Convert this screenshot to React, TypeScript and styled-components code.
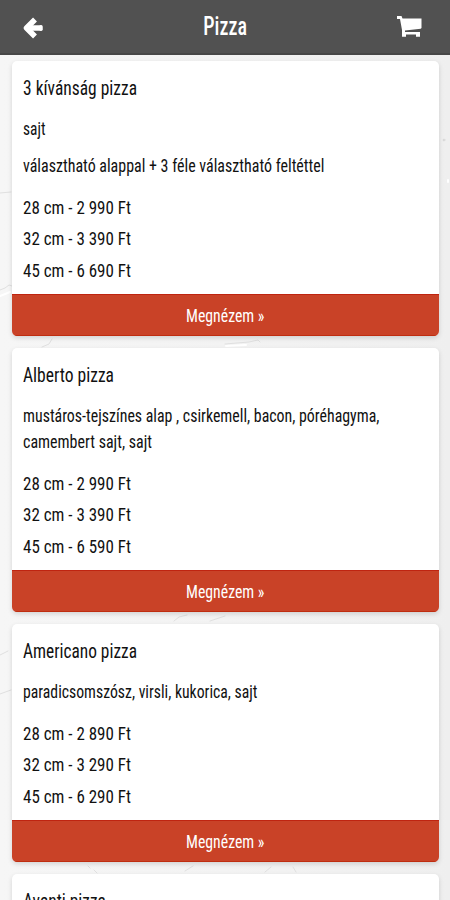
import React from 'react';
import styled, { createGlobalStyle } from 'styled-components';

const GlobalStyle = createGlobalStyle`
  html, body { margin: 0; padding: 0; height: 900px; overflow: hidden; }
  body { background: #f3f3f3; font-family: "Roboto", "Liberation Sans", sans-serif; font-stretch: 75%; color: #111; }
  * { box-sizing: border-box; }
`;

const Screen = styled.div`
  position: relative;
  isolation: isolate;
  width: 450px;
  height: 900px;
  overflow: hidden;
  background: linear-gradient(90deg, #f6f6f6 0, #f3f3f3 50%, #efefef 100%);
`;

const Plaster = styled.svg`
  position: absolute;
  inset: 0;
  z-index: -1;
`;

const Header = styled.header`
  display: grid;
  grid-template-columns: 60px 1fr 60px;
  align-items: center;
  height: 55px;
  padding: 0 12px 0 12px;
  background: #515151;
  border-bottom: 2px solid #474747;
  color: #fff;
`;

const IconButton = styled.button<{ $end?: boolean }>`
  display: flex;
  justify-content: ${p => (p.$end ? 'flex-end' : 'flex-start')};
  padding: ${p => (p.$end ? '0 16px 0 0' : '3px 0 0 10px')};
  border: 0;
  background: none;
  color: inherit;
`;

const PageTitle = styled.h1`
  margin: 0;
  text-align: center;
  font-size: 25px;
  font-weight: 500;
  line-height: 50px;
`;

const Narrow = styled.span<{ $scale: number; $origin?: string }>`
  display: inline-block;
  white-space: nowrap;
  transform: scaleX(${p => p.$scale});
  transform-origin: ${p => p.$origin ?? 'left'} center;
`;

const List = styled.main`
  display: flex;
  flex-direction: column;
  gap: 12px;
  padding: 6px 11px 0 12px;
`;

const Card = styled.article`
  flex: none;
  overflow: hidden;
  border-radius: 5px;
  background: #fff;
  box-shadow: 0 2px 5px rgba(0, 0, 0, 0.14);
`;

const CardBody = styled.div`
  padding: 8.5px 11px 7.5px;
`;

const Name = styled.h2`
  margin: 0 0 9px;
  font-size: 21px;
  font-weight: 400;
  line-height: 37px;
`;

const Description = styled.p`
  display: flex;
  flex-direction: column;
  align-items: flex-start;
  margin: 0 0 11px;
  font-size: 19px;
  line-height: 26px;
`;

const Prices = styled.ul`
  margin: 13px 0 0;
  padding: 0;
  list-style: none;
  font-size: 19px;
  line-height: 31.5px;
`;

const ViewButton = styled.button`
  display: block;
  width: 100%;
  height: 42.5px;
  padding: 0;
  border: 0;
  border-top: 1px solid #bf2410;
  border-bottom: 1px solid #bf2d10;
  background: #c94227;
  color: #fff;
  font: inherit;
  font-size: 19px;
  line-height: 42px;
  text-align: center;
`;

type Line = [text: string, scale: number];
type Pizza = { name: Line; paragraphs: Line[][]; prices: string[] };

const pizzas: Pizza[] = [
  {
    name: ['3 kívánság pizza', 0.8315],
    paragraphs: [[['sajt', 0.812]], [['választható alappal + 3 féle választható feltéttel', 0.8405]]],
    prices: ['28 cm - 2 990 Ft', '32 cm - 3 390 Ft', '45 cm - 6 690 Ft'],
  },
  {
    name: ['Alberto pizza', 0.834],
    paragraphs: [[['mustáros-tejszínes alap , csirkemell, bacon, póréhagyma,', 0.836], ['camembert sajt, sajt', 0.8415]]],
    prices: ['28 cm - 2 990 Ft', '32 cm - 3 390 Ft', '45 cm - 6 590 Ft'],
  },
  {
    name: ['Americano pizza', 0.826],
    paragraphs: [[['paradicsomszósz, virsli, kukorica, sajt', 0.8286]]],
    prices: ['28 cm - 2 890 Ft', '32 cm - 3 290 Ft', '45 cm - 6 290 Ft'],
  },
  { name: ['Avanti pizza', 0.828], paragraphs: [], prices: [] },
];

function PizzaCard({ pizza }: { pizza: Pizza }) {
  return (
    <Card>
      <CardBody>
        <Name><Narrow $scale={pizza.name[1]}>{pizza.name[0]}</Narrow></Name>
        {pizza.paragraphs.map((lines, i) => (
          <Description key={i}>
            {lines.map(([text, scale]) => <Narrow key={text} $scale={scale}>{text}</Narrow>)}
          </Description>
        ))}
        <Prices>
          {pizza.prices.map(price => <li key={price}><Narrow $scale={0.8955}>{price}</Narrow></li>)}
        </Prices>
      </CardBody>
      {pizza.prices.length > 0 && (
        <ViewButton><Narrow $scale={0.83} $origin="center">Megnézem »</Narrow></ViewButton>
      )}
    </Card>
  );
}

export default function App() {
  return (
    <>
      <GlobalStyle />
      <Screen>
        <Plaster width="450" height="900" viewBox="0 0 450 900" fill="none" stroke="#e0e0e0" strokeLinecap="round" aria-hidden="true">
          <path d="M0 290l5-2 4-3 3 1M42 347l7-3 3-5M225 344l24-2 9-2 2 2M0 193l11-1M0 694l11-4M174 621l5-4 8-2M210 621l15-5M88 866l2 2M94 870l3 3M185 871l8-5M265 872l6-5M293 867l3 5M0 655l8-4" />
          <circle cx="444" cy="140" r="1" fill="#bbb" />
          <path d="M448 182v-2M226 346l20-1M0 296l10-4" stroke="#fff" strokeWidth="2" />
        </Plaster>
        <Header>
          <IconButton aria-label="Vissza">
            <svg width="22" height="24" viewBox="0 0 22 24" fill="none" stroke="currentColor" strokeWidth="5.5" strokeLinejoin="round">
              <path d="M13 3.500L4.500 12l8.500 8.500" />
              <path d="M5 12h14.500" strokeLinecap="butt" />
              <path d="M19 10.800v2.400" strokeWidth="3.500" strokeLinecap="round" />
            </svg>
          </IconButton>
          <PageTitle><Narrow $scale={0.805} $origin="center">Pizza</Narrow></PageTitle>
          <IconButton $end aria-label="Kosár">
            <svg width="26" height="24" viewBox="0 0 26 24" fill="currentColor">
              <path d="M1 1h4.500l1 2.500H25.500V13l-.8.8L9 15.500v1.500h15v4.800h-4V19.500H10v2.300H6V15L4 4H1z" />
            </svg>
          </IconButton>
        </Header>
        <List>{pizzas.map(pizza => <PizzaCard key={pizza.name[0]} pizza={pizza} />)}</List>
      </Screen>
    </>
  );
}
